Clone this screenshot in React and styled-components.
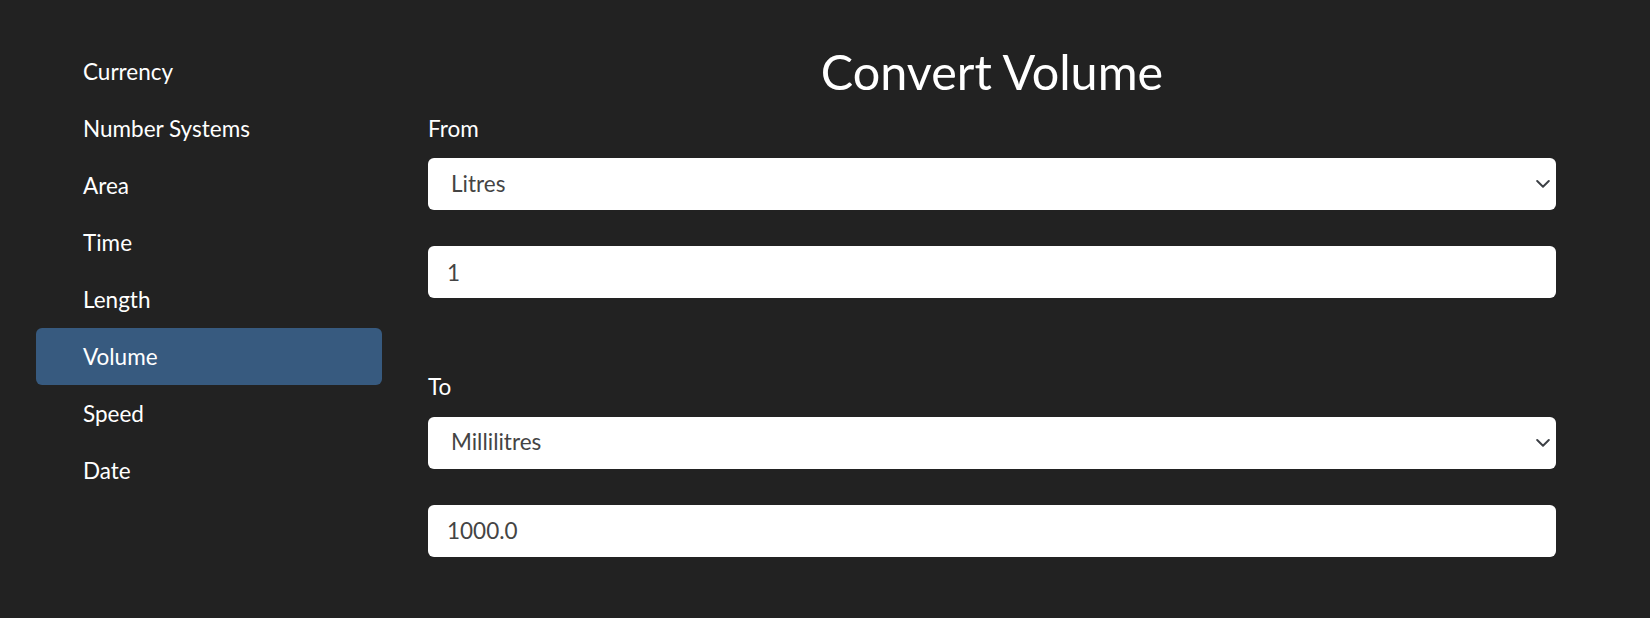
import React, { useState } from "react";
import styled, { createGlobalStyle } from "styled-components";

const GlobalStyle = createGlobalStyle`
  html, body {
    margin: 0;
    padding: 0;
    background: #222222;
  }

  body {
    font-family: Lato, "Open Sans", "Liberation Sans", sans-serif;
    font-size: 22.5px;
    line-height: 1.5;
    color: #ffffff;
  }

  * {
    box-sizing: border-box;
  }
`;

const Page = styled.div`
  display: grid;
  grid-template-columns: 346px 1128px;
  column-gap: 46px;
  align-items: start;
  min-height: 618px;
  padding: 42px 0 0 36px;
  background: #222222;
`;

const Sidebar = styled.nav`
  display: flex;
  flex-direction: column;
  margin-top: 1px;
`;

const NavLink = styled.a`
  display: block;
  padding: 11.5px 20px 11.5px 47px;
  line-height: 34px;
  font-size: 22.5px;
  color: #ffffff;
  text-decoration: none;
  border-radius: 6px;
  cursor: pointer;
  background: ${(p) => (p.$active ? "#375a7f" : "transparent")};
`;

const Main = styled.main`
  display: flex;
  flex-direction: column;
`;

const Title = styled.h1`
  margin: 0 0 12px;
  font-size: 48.5px;
  font-weight: 400;
  line-height: 1.2;
  text-align: center;
`;

const Group = styled.div`
  display: flex;
  flex-direction: column;

  & + & {
    margin-top: 72px;
  }
`;

const Label = styled.label`
  display: block;
  line-height: 33.75px;
  margin-bottom: 12.5px;
`;

const SelectWrap = styled.div`
  position: relative;
  margin-bottom: 36px;
`;

const Select = styled.select`
  display: block;
  width: 100%;
  height: 52px;
  padding: 0 40px 2px 23px;
  border: none;
  border-radius: 6px;
  background: #ffffff;
  color: #444444;
  font-family: inherit;
  font-size: 22.5px;
  appearance: none;
  -webkit-appearance: none;
  outline: none;
`;

const Chevron = styled.svg`
  position: absolute;
  right: 6px;
  top: 50%;
  transform: translateY(-50%);
  pointer-events: none;
`;

const Input = styled.input`
  display: block;
  width: 100%;
  height: 52px;
  padding: 0 19px;
  border: none;
  border-radius: 6px;
  background: #ffffff;
  color: #444444;
  font-family: inherit;
  font-size: 22.5px;
  outline: none;
`;

const sections = [
  "Currency",
  "Number Systems",
  "Area",
  "Time",
  "Length",
  "Volume",
  "Speed",
  "Date",
];

const units = ["Litres", "Millilitres", "Cubic metres", "Gallons"];

const UnitField = ({ label, unit, setUnit, value, setValue }) => (
  <Group>
    <Label>{label}</Label>
    <SelectWrap>
      <Select value={unit} onChange={(e) => setUnit(e.target.value)}>
        {units.map((u) => (
          <option key={u}>{u}</option>
        ))}
      </Select>
      <Chevron width="14" height="9" viewBox="0 0 14 9">
        <polyline
          points="1.2,1.5 7,7.2 12.8,1.5"
          fill="none"
          stroke="#3d4146"
          strokeWidth="2"
          strokeLinecap="round"
          strokeLinejoin="round"
        />
      </Chevron>
    </SelectWrap>
    <Input value={value} onChange={(e) => setValue(e.target.value)} />
  </Group>
);

const App = () => {
  const [active, setActive] = useState("Volume");
  const [fromUnit, setFromUnit] = useState("Litres");
  const [toUnit, setToUnit] = useState("Millilitres");
  const [fromValue, setFromValue] = useState("1");
  const [toValue, setToValue] = useState("1000.0");

  return (
    <>
      <GlobalStyle />
      <Page>
        <Sidebar>
          {sections.map((s) => (
            <NavLink key={s} $active={s === active} onClick={() => setActive(s)}>
              {s}
            </NavLink>
          ))}
        </Sidebar>
        <Main>
          <Title>Convert Volume</Title>
          <UnitField
            label="From"
            unit={fromUnit}
            setUnit={setFromUnit}
            value={fromValue}
            setValue={setFromValue}
          />
          <UnitField
            label="To"
            unit={toUnit}
            setUnit={setToUnit}
            value={toValue}
            setValue={setToValue}
          />
        </Main>
      </Page>
    </>
  );
};

export default App;
